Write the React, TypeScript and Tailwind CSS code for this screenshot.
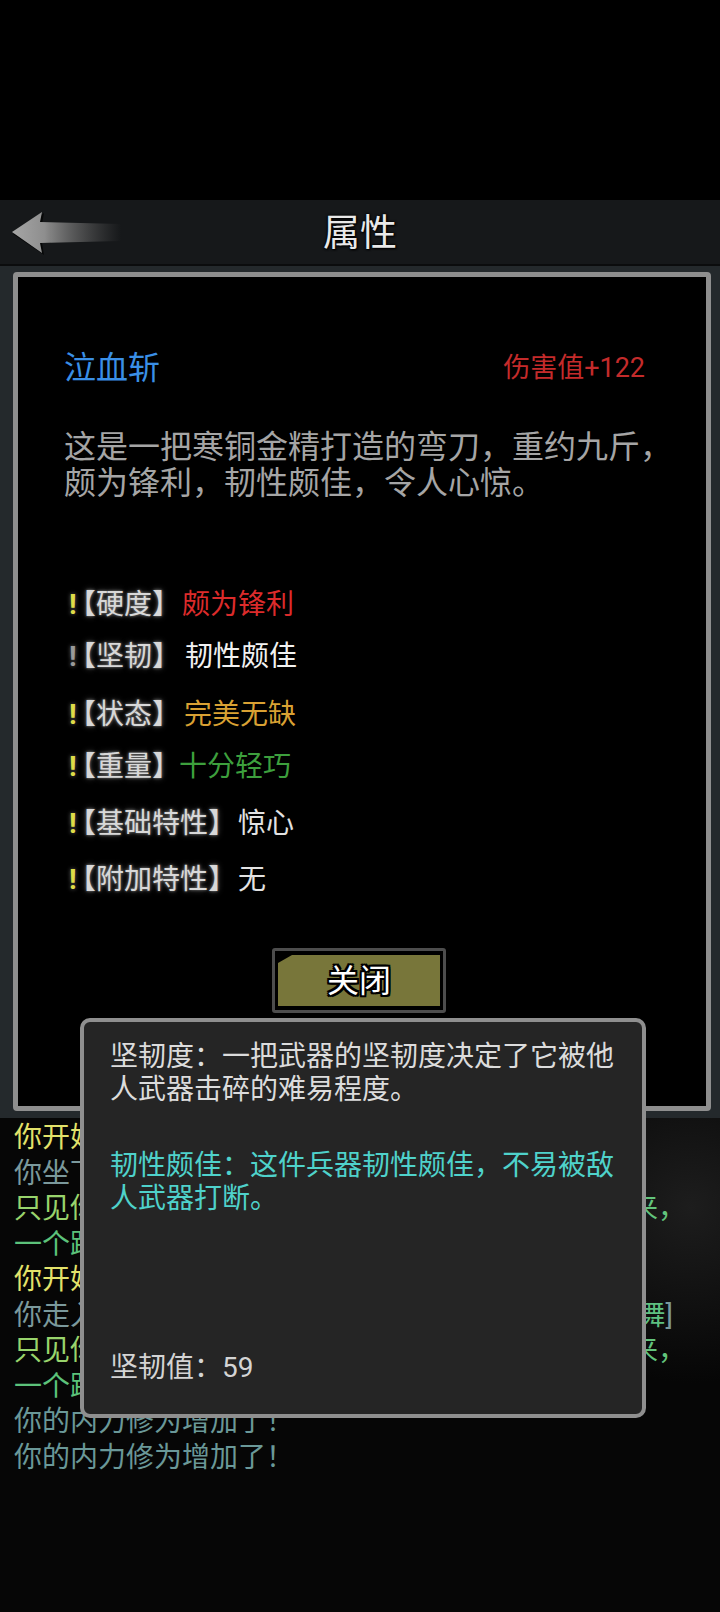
import React from 'react';

type Attr = {
  label: string;
  value: string;
  valueClass: string;
  markClass: string;
  rowClass: string;
};

const attrs: Attr[] = [
  { label: '【硬度】', value: '颇为锋利', valueClass: 'text-[#dc2b2b] ml-[16px]', markClass: 'text-[#dedc48]', rowClass: 'mt-[86px]' },
  { label: '【坚韧】', value: '韧性颇佳', valueClass: 'text-[#f2f2f2] ml-[19px]', markClass: 'text-[#9a9a9a]', rowClass: 'mt-[16px]' },
  { label: '【状态】', value: '完美无缺', valueClass: 'text-[#d9a133] ml-[18px]', markClass: 'text-[#dedc48]', rowClass: 'mt-[22px]' },
  { label: '【重量】', value: '十分轻巧', valueClass: 'text-[#3d9f3d] ml-[13px]', markClass: 'text-[#dedc48]', rowClass: 'mt-[16px]' },
  { label: '【基础特性】', value: '惊心', valueClass: 'text-[#e2e2e2] ml-[16px]', markClass: 'text-[#dedc48]', rowClass: 'mt-[21px]' },
  { label: '【附加特性】', value: '无', valueClass: 'text-[#e2e2e2] ml-[16px]', markClass: 'text-[#dedc48]', rowClass: 'mt-[20px]' },
];

const BackArrow: React.FC = () => (
  <svg width="112" height="46" viewBox="0 0 112 46">
    <defs>
      <linearGradient id="arrowFill" x1="0" y1="0" x2="1" y2="0">
        <stop offset="0" stopColor="#a6a6a6" />
        <stop offset="0.3" stopColor="#8e8e8e" />
        <stop offset="0.65" stopColor="#6a6a6a" stopOpacity="0.6" />
        <stop offset="1" stopColor="#5a5a5a" stopOpacity="0" />
      </linearGradient>
    </defs>
    <path d="M2 24 L33 3 L31 14 L40 14 L40 33 L31 33 L33 45 Z" fill="#000" opacity="0.7" />
    <path d="M1 22 L31 2 L29 12 L110 14 L110 31 L29 33 L31 43 Z" fill="url(#arrowFill)" />
  </svg>
);

const App: React.FC = () => {
  return (
    <div className="relative w-[720px] h-[1612px] overflow-hidden bg-black font-['Roboto','Noto_Sans_CJK_SC',sans-serif]">
      <div className="h-[200px]" />

      <header className="h-[66px] grid grid-cols-[1fr_auto_1fr] items-center bg-[#16181a] border-b-2 border-[#0b0c0d]">
        <div className="pl-[11px] pt-[2px]">
          <BackArrow />
        </div>
        <h1 className="pt-[2px] text-[37px] leading-none text-[#e9e9e9] [text-shadow:0_0_2px_#000,0_0_3px_#000,1px_1px_2px_#000]">
          属性
        </h1>
        <div />
      </header>

      <section className="bg-[#24292c] pl-[13px] pr-[9px] pt-[6px] pb-[7px]">
        <div className="h-[839px] rounded-[4px] border-[5px] border-[#8e8e8e] bg-black pl-[46px] pr-[61px] pt-[72px]">
          <div className="flex items-center justify-between">
            <span className="text-[32px] leading-[38px] text-[#3a8fe6]">泣血斩</span>
            <span className="text-[27px] leading-[38px] text-[#c42b2b]">伤害值+122</span>
          </div>

          <p className="mt-[42px] whitespace-nowrap text-[32px] leading-[36px] text-[#a5a5a5]">
            这是一把寒铜金精打造的弯刀，重约九斤，
            <br />
            颇为锋利，韧性颇佳，令人心惊。
          </p>

          {attrs.map((a) => (
            <div key={a.label} className={`flex items-center pl-[5px] text-[28px] leading-[36px] ${a.rowClass}`}>
              <span className={`w-[13px] font-bold [text-shadow:0_0_4px_#666] ${a.markClass}`}>!</span>
              <span className="text-[#d8d8d8] [font-feature-settings:'halt'] [text-shadow:0_0_3px_#8a8a8a,0_0_6px_#4a4a4a]">
                {a.label}
              </span>
              <span className={a.valueClass}>{a.value}</span>
            </div>
          ))}

          <div className="mt-[50px] ml-[208px] h-[65px] w-[174px] rounded-[3px] border-[3px] border-[#4d4d4d] bg-black px-[3px] py-[4px]">
            <div className="flex h-full items-center justify-center bg-[#78763a] [clip-path:polygon(14px_0,100%_0,100%_100%,0_100%,0_8px)]">
              <span className="text-[32px] leading-none text-white [text-shadow:-2px_-2px_0_#000,2px_-2px_0_#000,-2px_2px_0_#000,2px_2px_0_#000,0_2px_0_#000,0_-2px_0_#000,2px_0_0_#000,-2px_0_0_#000]">
                关闭
              </span>
            </div>
          </div>
        </div>
      </section>

      <section className="h-[494px] bg-[#060606] bg-[radial-gradient(circle_at_96%_18%,#1d1d1d_0,transparent_22%)] pl-[14px] pt-[2px] text-[28px] leading-[35.5px] whitespace-nowrap">
        <div className="text-[#e2e26a]">你开始运转内功心法，缓缓吐纳。</div>
        <div className="text-[#7b999c]">你坐下来盘膝打坐，开始修炼内功。</div>
        <div>
          <span className="text-[#98d46c]">只见你身形一晃，</span>
          <span className="text-[#62c47c]">脚下生风，一道凌厉剑气呼啸而来，</span>
        </div>
        <div className="text-[#5cc27a]">一个踉跄，险些站立不稳。</div>
        <div className="text-[#e2e26a]">你开始运转内功心法，缓缓吐纳。</div>
        <div className="text-[#7b999c]">
          你走入了后山练功房，开始专心致志地练习[<span className="text-[#5ec080]">太极剑舞</span>]
        </div>
        <div>
          <span className="text-[#98d46c]">只见你手腕一抖，</span>
          <span className="text-[#62c47c]">剑光闪动，一股凌厉剑气扑面而来，</span>
        </div>
        <div className="text-[#5cc27a]">一个踉跄，险些站立不稳。</div>
        <div className="text-[#6a9898]">你的内力修为增加了！</div>
        <div className="text-[#6a9898]">你的内力修为增加了！</div>
      </section>

      <div className="absolute left-[80px] top-[1018px] flex h-[400px] w-[566px] flex-col rounded-[10px] border-4 border-[#8f8f8f] bg-[#252525] px-[26px] pt-[18px] pb-[30px] text-[28px] leading-[33px] whitespace-nowrap">
        <p className="text-[#dcdcdc]">
          坚韧度：一把武器的坚韧度决定了它被他
          <br />
          人武器击碎的难易程度。
        </p>
        <p className="mt-[43px] text-[#4fd2cb]">
          韧性颇佳：这件兵器韧性颇佳，不易被敌
          <br />
          人武器打断。
        </p>
        <p className="mt-auto text-[#d4d4d4]">坚韧值：59</p>
      </div>
    </div>
  );
};

export default App;
